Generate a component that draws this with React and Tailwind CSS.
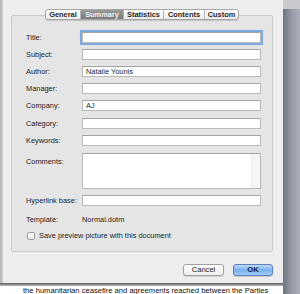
const font = { fontFamily: '"Liberation Sans", Arial, sans-serif' };

const fields = [
  { label: "Title:", value: "", focus: true, mt: "mt-[16px]" },
  { label: "Subject:", value: "", mt: "mt-[6px]" },
  { label: "Author:", value: "Natalie Younis", mt: "mt-[6px]" },
  { label: "Manager:", value: "", mt: "mt-[6px]" },
  { label: "Company:", value: "AJ", mt: "mt-[6px]" },
  { label: "Category:", value: "", mt: "mt-[6px]" },
  { label: "Keywords:", value: "", mt: "mt-[6px]" },
];

const tabs = ["General", "Summary", "Statistics", "Contents", "Custom"];

const Field = ({ label, value, focus, mt }) => (
  <div className={`flex items-center ${mt}`}>
    <span className="w-[56px] shrink-0">{label}</span>
    <div
      className={`h-[11px] w-[179px] bg-white border border-[#b9b9b9] border-t-[#a3a3a3] flex items-center pl-[3px] ${
        focus ? "outline-2 outline-[#7ea9e1] shadow-[0_0_2px_1px_#9cc0ee]" : ""
      }`}
    >
      {value}
    </div>
  </div>
);

const App = () => {
  return (
    <div
      className="w-[300px] h-[294px] overflow-hidden flex bg-white text-[7.4px] text-[#1c1c1c]"
      style={font}
    >
      {/* Left: sheet + document underneath */}
      <div className="w-[283px] flex flex-col">
        <div className="h-[283px] flex">
          <div className="w-[3px] bg-gradient-to-r from-[#b5b5b5] to-[#cfcfcf]" />
          <div className="flex-1 bg-[#ededed] pl-[8px] pr-[10px] pt-[9px] flex flex-col">
            {/* Tabs */}
            <div className="flex justify-center relative z-10">
              <div className="flex h-[11px] rounded-[3px] border border-[#a6a6a6] bg-gradient-to-b from-[#ffffff] to-[#ebebeb] shadow-[0_1px_1px_rgba(0,0,0,0.15)] overflow-hidden">
                {tabs.map((t, i) => (
                  <div
                    key={t}
                    className={`flex items-center justify-center font-bold leading-none ${
                      i > 0 ? "border-l border-[#b3b3b3]" : ""
                    } ${
                      t === "Summary"
                        ? "bg-gradient-to-b from-[#9a9a9a] to-[#7c7c7c] text-[#eeeeee]"
                        : "text-[#2a2a2a]"
                    } ${
                      ["w-[34px]", "w-[43px]", "w-[40px]", "w-[41px]", "w-[34px]"][i]
                    }`}
                  >
                    {t}
                  </div>
                ))}
              </div>
            </div>

            {/* Group box */}
            <div className="-mt-[5px] h-[237px] border border-[#c9c9c9] rounded-[2px] bg-[#e5e5e5] pl-[14px] flex flex-col">
              {fields.map((f) => (
                <Field key={f.label} {...f} />
              ))}
              <div className="flex mt-[7px]">
                <span className="w-[56px] shrink-0 pt-[3px]">Comments:</span>
                <div className="h-[36px] w-[179px] bg-white border border-[#b9b9b9] border-t-[#a3a3a3] flex justify-end">
                  <div className="w-[9px] h-full bg-[#f5f5f5] border-l border-[#ebebeb]" />
                </div>
              </div>
              <div className="flex items-center mt-[6px]">
                <span className="w-[56px] shrink-0">Hyperlink base:</span>
                <div className="h-[11px] w-[179px] bg-white border border-[#b9b9b9] border-t-[#a3a3a3]" />
              </div>
              <div className="flex items-center mt-[8px]">
                <span className="w-[56px] shrink-0">Template:</span>
                <span>Normal.dotm</span>
              </div>
              <div className="flex items-center mt-[5px] ml-[1px]">
                <div className="w-[8px] h-[8px] rounded-[2px] border border-[#9d9d9d] bg-gradient-to-b from-white to-[#e8e8e8] mr-[4px]" />
                <span>Save preview picture with this document</span>
              </div>
            </div>

            {/* Buttons */}
            <div className="flex justify-end gap-[9px] mt-[12px]">
              <button className="w-[41px] h-[12px] rounded-[3px] border border-[#a0a0a0] bg-gradient-to-b from-white to-[#ececec] text-[7.6px] leading-none text-[#1c1c1c] shadow-[0_1px_1px_rgba(0,0,0,0.12)]">
                Cancel
              </button>
              <button className="w-[40px] h-[12px] rounded-[3px] border border-[#5a7fbf] bg-gradient-to-b from-[#c4dcf7] via-[#79b0ec] to-[#9fcaf6] text-[7.6px] font-bold leading-none text-[#15233a] shadow-[0_1px_1px_rgba(0,0,0,0.15)]">
                OK
              </button>
            </div>
          </div>
        </div>

        {/* Document behind the sheet */}
        <div className="flex-1 bg-white overflow-hidden">
          <div className="h-[3px] bg-gradient-to-b from-[#5c5c5c] to-[#bdbdbd]" />
          <div className="pl-[23px] pt-[1px] text-[7.6px] leading-[8px] text-[#111] whitespace-nowrap">
            the humanitarian ceasefire and agreements reached between the Parties
          </div>
        </div>
      </div>

      {/* Right: window background */}
      <div className="flex-1 flex flex-col">
        <div className="h-[9px] bg-[#c8c9cc]" />
        <div className="flex-1 bg-gradient-to-r from-[#6f7580] via-[#959aa5] to-[#abb0ba]" />
      </div>
    </div>
  );
};

export default App;
